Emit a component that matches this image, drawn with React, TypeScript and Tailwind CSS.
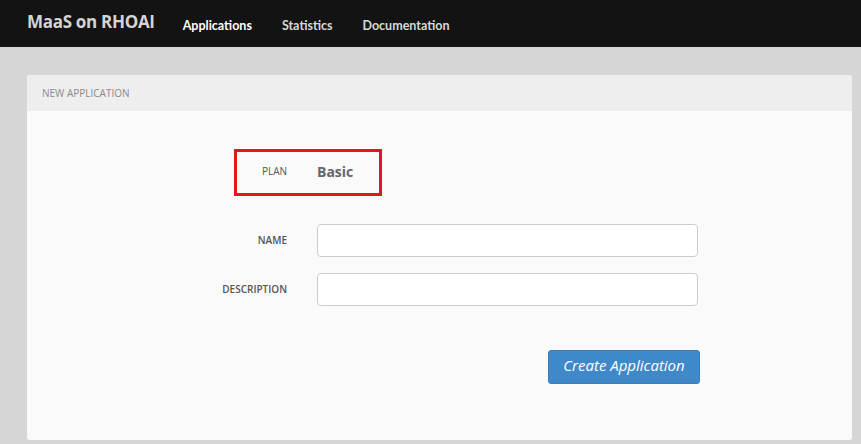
import React, { useState } from 'react';

const NAV = ['Applications', 'Statistics', 'Documentation'];

const App: React.FC = () => {
  const [name, setName] = useState('');
  const [description, setDescription] = useState('');

  return (
    <div className="min-h-[444px] bg-[#d6d6d6] font-['Open_Sans',sans-serif]">
      <header className="h-[47px] bg-[#131313] flex items-center pl-[27px]">
        <span className="text-[17px] font-bold text-[#d4d4d4] tracking-[-0.3px] -mt-[3px]">MaaS on RHOAI</span>
        <nav className="flex gap-[30px] ml-[28px] mt-[5px] text-[12.5px] font-bold font-['Lato',sans-serif]">
          {NAV.map((item, i) => (
            <a key={item} className={i === 0 ? 'text-white' : 'text-[#d8d8d8]'}>
              {item}
            </a>
          ))}
        </nav>
      </header>

      <main className="pl-[27px] pr-[9px] pt-[28px] pb-[3px]">
        <section className="rounded-[3px] bg-[#fafafa] overflow-hidden">
          <div className="h-[36px] bg-[#eeeeee] flex items-center pl-[15px] text-[10px] text-[#8a8a8a] uppercase">
            New Application
          </div>

          <div className="pt-[38px] pb-[56px]">
            <div className="ml-[207px] inline-flex items-center h-[47px] border-[3px] border-[#e3151d] pr-[26px] pb-[2px]">
              <span className="w-[50px] text-right text-[10px] font-medium text-[#555]">PLAN</span>
              <span className="ml-[30px] text-[14px] font-bold text-[#666]">Basic</span>
            </div>

            <div className="mt-[28px] flex flex-col gap-[16px]">
              <label className="flex items-center">
                <span className="w-[260px] text-right text-[10px] font-semibold text-[#555]">NAME</span>
                <input
                  value={name}
                  onChange={e => setName(e.target.value)}
                  className="ml-[30px] w-[381px] h-[33px] bg-white border border-[#cccccc] rounded-[4px] px-2 text-sm outline-none"
                />
              </label>
              <label className="flex items-center">
                <span className="w-[260px] text-right text-[10px] font-semibold text-[#555]">DESCRIPTION</span>
                <input
                  value={description}
                  onChange={e => setDescription(e.target.value)}
                  className="ml-[30px] w-[381px] h-[33px] bg-white border border-[#cccccc] rounded-[4px] px-2 text-sm outline-none"
                />
              </label>
            </div>

            <div className="mt-[44px] flex">
              <button className="ml-[521px] w-[152px] h-[34px] pb-[3px] rounded-[3px] bg-[#3f89ca] border border-[#3a7fbc] text-white italic text-[15px]">
                Create Application
              </button>
            </div>
          </div>
        </section>
      </main>
    </div>
  );
};

export default App;
